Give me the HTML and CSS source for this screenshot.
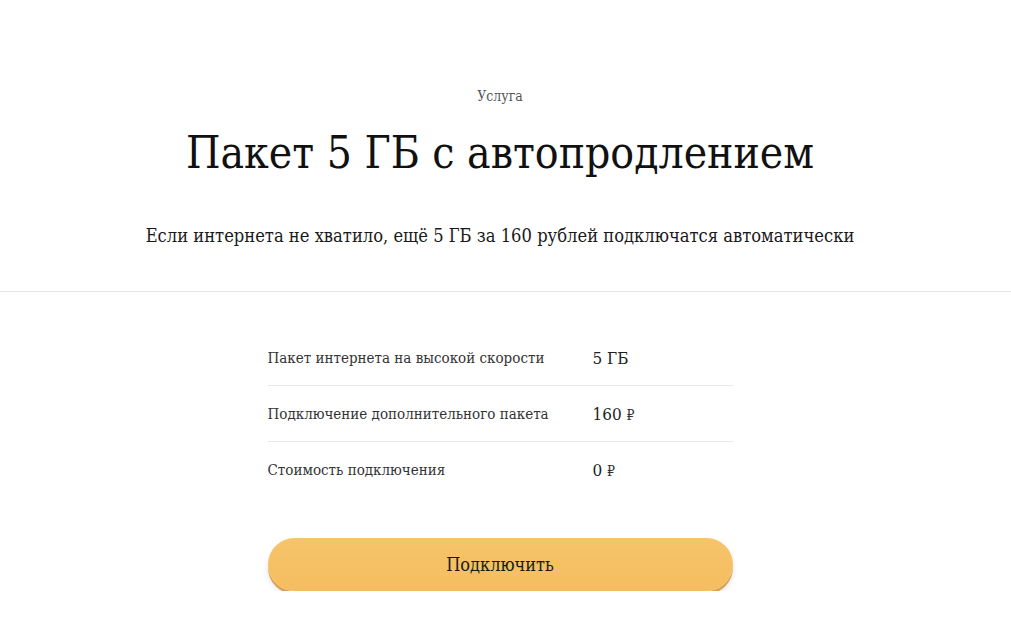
FILE: index.html
```html
<!DOCTYPE html>
<html lang="ru">
<head>
<meta charset="utf-8">
<link rel="stylesheet" href="styles.css">
</head>
<body>
<header class="hero">
  <div class="kicker">Услуга</div>
  <h1 class="title">Пакет 5 ГБ с автопродлением</h1>
  <p class="lead">Если интернета не хватило, ещё 5 ГБ за 160 рублей подключатся автоматически</p>
</header>
<main class="details">
  <div class="params">
    <div class="row"><span class="label">Пакет интернета на высокой скорости</span><span class="value">5 ГБ</span></div>
    <div class="row"><span class="label">Подключение дополнительного пакета</span><span class="value">160 <span class="rub">₽</span></span></div>
    <div class="row"><span class="label">Стоимость подключения</span><span class="value">0 <span class="rub">₽</span></span></div>
  </div>
  <button class="btn">Подключить</button>
</main>
</body>
</html>
```
FILE: styles.css
```css
html, body {
  margin: 0;
  padding: 0;
  background: #fff;
}
body {
  font-family: "DejaVu Serif Condensed", "DejaVu Serif", serif;
  color: #1a1a1a;
}
.hero {
  display: flex;
  flex-direction: column;
  align-items: center;
  padding: 87px 11px 0 0;
  height: 204px;
  border-bottom: 1px solid #e6e6e6;
}
.kicker {
  font-size: 14px;
  line-height: 18px;
  color: #555;
}
.title {
  margin: 20px 0 0;
  font-size: 44px;
  line-height: 56px;
  font-weight: normal;
  color: #111;
}
.lead {
  margin: 43px 0 0;
  font-size: 18.2px;
  line-height: 24px;
  color: #1a1a1a;
}
.details {
  display: flex;
  flex-direction: column;
  align-items: center;
  padding: 38px 11px 0 0;
}
.params {
  width: 465px;
  display: flex;
  flex-direction: column;
}
.row {
  display: grid;
  grid-template-columns: 325px 1fr;
  align-items: center;
  height: 55px;
  border-bottom: 1px solid #e8e8e8;
}
.row:last-child {
  border-bottom: none;
}
.label {
  font-size: 15px;
  color: #333;
}
.value {
  font-size: 17px;
  color: #222;
}
.rub {
  font-size: 14px;
  color: #333;
}
.btn {
  margin-top: 41px;
  width: 465px;
  height: 53px;
  border: none;
  border-radius: 27px;
  background: linear-gradient(#f6c46a, #f5bd5f);
  box-shadow: 0 3px 0 #dc9e52, 0 4px 6px rgba(0,0,0,0.12);
  font-family: inherit;
  font-size: 18px;
  color: #1a1a1a;
  cursor: pointer;
}
```
